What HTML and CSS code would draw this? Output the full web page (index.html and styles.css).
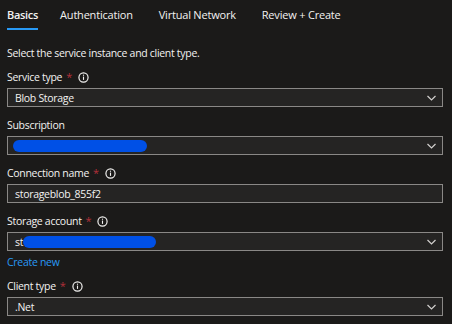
FILE: index.html
```html
<!DOCTYPE html>
<html>
<head>
<meta charset="utf-8">
<link rel="stylesheet" href="styles.css">
</head>
<body>
<div class="page">
  <nav class="tabs">
    <div class="tab active">Basics</div>
    <div class="tab">Authentication</div>
    <div class="tab">Virtual Network</div>
    <div class="tab">Review + Create</div>
  </nav>
  <p class="desc">Select the service instance and client type.</p>

  <div class="field">
    <div class="label">Service type<span class="req">*</span><svg class="info" viewBox="0 0 12 12"><circle cx="6" cy="6" r="5" fill="none" stroke="currentColor" stroke-width="1.3"/><rect x="5.4" y="5" width="1.2" height="3.6" fill="currentColor"/><rect x="5.4" y="2.9" width="1.2" height="1.2" fill="currentColor"/></svg></div>
    <div class="box"><span class="val">Blob Storage</span><svg class="chev" viewBox="0 0 9 6"><polyline points="0.5,1 4.5,5 8.5,1" fill="none" stroke="currentColor" stroke-width="1.2"/></svg></div>
  </div>

  <div class="field">
    <div class="label">Subscription</div>
    <div class="box"><span class="blob blob-sub"></span><svg class="chev" viewBox="0 0 9 6"><polyline points="0.5,1 4.5,5 8.5,1" fill="none" stroke="currentColor" stroke-width="1.2"/></svg></div>
  </div>

  <div class="field">
    <div class="label">Connection name<span class="req">*</span><svg class="info" viewBox="0 0 12 12"><circle cx="6" cy="6" r="5" fill="none" stroke="currentColor" stroke-width="1.3"/><rect x="5.4" y="5" width="1.2" height="3.6" fill="currentColor"/><rect x="5.4" y="2.9" width="1.2" height="1.2" fill="currentColor"/></svg></div>
    <div class="box"><span class="val">storageblob_855f2</span></div>
  </div>

  <div class="field">
    <div class="label">Storage account<span class="req">*</span><svg class="info" viewBox="0 0 12 12"><circle cx="6" cy="6" r="5" fill="none" stroke="currentColor" stroke-width="1.3"/><rect x="5.4" y="5" width="1.2" height="3.6" fill="currentColor"/><rect x="5.4" y="2.9" width="1.2" height="1.2" fill="currentColor"/></svg></div>
    <div class="box"><span class="val">st</span><span class="blob blob-sa"></span><svg class="chev" viewBox="0 0 9 6"><polyline points="0.5,1 4.5,5 8.5,1" fill="none" stroke="currentColor" stroke-width="1.2"/></svg></div>
    <a class="link">Create new</a>
  </div>

  <div class="field">
    <div class="label">Client type<span class="req">*</span><svg class="info" viewBox="0 0 12 12"><circle cx="6" cy="6" r="5" fill="none" stroke="currentColor" stroke-width="1.3"/><rect x="5.4" y="5" width="1.2" height="3.6" fill="currentColor"/><rect x="5.4" y="2.9" width="1.2" height="1.2" fill="currentColor"/></svg></div>
    <div class="box"><span class="val">.Net</span><svg class="chev" viewBox="0 0 9 6"><polyline points="0.5,1 4.5,5 8.5,1" fill="none" stroke="currentColor" stroke-width="1.2"/></svg></div>
  </div>
</div>
</body>
</html>
```

FILE: styles.css
```css
* { box-sizing: border-box; }
html, body {
  margin: 0;
  padding: 0;
  background: #1b1a19;
}
body {
  width: 452px;
  height: 324px;
  overflow: hidden;
  font-family: "Open Sans", "Noto Sans", sans-serif;
  font-size: 10.5px;
  letter-spacing: -0.3px;
  line-height: 16px;
  color: #f3f2f1;
}
.page {
  padding: 7px 9px 0 7px;
}
.tabs {
  display: flex;
  gap: 26px;
  font-size: 11px;
  letter-spacing: -0.2px;
}
.tab {
  padding-bottom: 5px;
  border-bottom: 2px solid transparent;
  color: #f3f2f1;
}
.tab.active {
  border-bottom-color: #2899f5;
  font-weight: 600;
  letter-spacing: -0.3px;
  margin-right: -4px;
}
.desc {
  margin: 15px 0 8px;
}
.field {
  margin-bottom: 10px;
}
.label {
  display: flex;
  align-items: center;
  height: 16px;
  margin-bottom: 3px;
}
.req {
  color: #b3303a;
  margin-left: 4px;
  font-size: 11px;
}
.info {
  width: 11px;
  height: 11px;
  margin-left: 6px;
  color: #f3f2f1;
}
.box {
  display: flex;
  align-items: center;
  height: 19px;
  border: 1px solid #8a8886;
  background: #252423;
  padding: 0 6px 0 7px;
}
.val {
  white-space: pre;
}
.blob {
  display: block;
  height: 12px;
  border-radius: 6px;
  background: #0050e6;
}
.blob-sub {
  width: 134px;
  margin-left: -2px;
}
.blob-sa {
  width: 133px;
}
.chev {
  margin-left: auto;
  width: 9px;
  height: 6px;
  color: #d2d0ce;
}
.link {
  display: block;
  color: #2899f5;
  margin-top: 3px;
  margin-bottom: -2px;
}
```
